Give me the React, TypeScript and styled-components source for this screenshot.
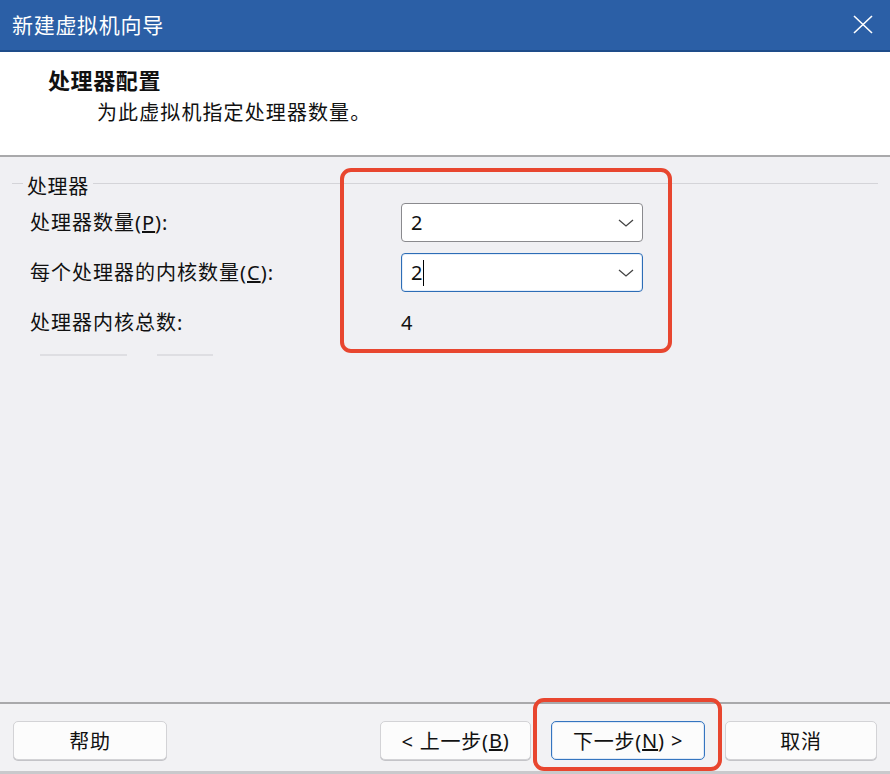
import React from 'react';
import styled, { createGlobalStyle } from 'styled-components';

const GlobalStyle = createGlobalStyle`
  html, body {
    margin: 0;
    padding: 0;
    background: #ffffff;
  }
  * {
    box-sizing: border-box;
  }
`;

const Window = styled.div`
  width: 890px;
  height: 774px;
  display: flex;
  flex-direction: column;
  font-family: 'Noto Sans', 'Noto Sans CJK SC', sans-serif;
  color: #111;
  background: #f0f0f3;
  overflow: hidden;
`;

const TitleBar = styled.div`
  height: 52px;
  flex: none;
  display: flex;
  align-items: center;
  justify-content: space-between;
  padding: 0 16px 2px 12px;
  background: #2b5fa6;
  border-bottom: 2px solid #1e4c8a;
`;

const TitleText = styled.span`
  color: #fff;
  font-size: 21px;
  letter-spacing: 0.7px;
`;

const CloseBtn = styled.button`
  width: 22px;
  height: 22px;
  padding: 0;
  border: none;
  background: none;
  display: flex;
  align-items: center;
  justify-content: center;
`;

const Header = styled.div`
  height: 105px;
  flex: none;
  display: flex;
  flex-direction: column;
  padding: 13px 0 0 48px;
  background: #fff;
  border-bottom: 2px solid #a9a9ab;
`;

const HeaderTitle = styled.div`
  font-size: 22px;
  font-weight: 700;
  line-height: 30px;
  letter-spacing: 0.6px;
`;

const HeaderDesc = styled.div`
  font-size: 20px;
  line-height: 30px;
  margin: 3px 0 0 49px;
  letter-spacing: 1.1px;
`;

const Body = styled.div`
  flex: 1;
  padding: 16px 12px 0 12px;
  background: #f0f0f3;
`;

const GroupBox = styled.div`
  position: relative;
  display: flex;
  flex-direction: column;
`;

const Legend = styled.div`
  display: flex;
  align-items: center;
  gap: 4px;
  height: 24px;
  font-size: 20px;
  letter-spacing: 0.6px;
  &::before {
    content: '';
    width: 11px;
    height: 1px;
    background: #d4d4d8;
    margin-top: -4px;
  }
  &::after {
    content: '';
    flex: 1;
    height: 1px;
    background: #d4d4d8;
    margin-top: -4px;
  }
`;

const FieldGrid = styled.div`
  display: grid;
  grid-template-columns: 371px 242px;
  grid-auto-rows: 39px;
  row-gap: 11px;
  margin-top: 6px;
  padding-left: 18px;
  align-items: center;
`;

const Label = styled.label`
  font-size: 20px;
  letter-spacing: 1px;
  line-height: 26px;
`;

const Combo = styled.div<{ $focused?: boolean }>`
  height: 39px;
  display: flex;
  align-items: center;
  justify-content: space-between;
  padding: 0 8px 0 9px;
  background: #fff;
  border: 1px solid ${(p) => (p.$focused ? '#2d6db6' : '#8a8a8e')};
  border-radius: 4px;
  box-shadow: ${(p) => (p.$focused ? 'inset 0 0 0 1px #e4eefa' : 'none')};
  font-size: 20px;
`;

const ComboValue = styled.span`
  display: flex;
  align-items: center;
`;

const Caret = styled.span`
  width: 1px;
  height: 26px;
  background: #000;
  margin-left: 1px;
`;

const Total = styled.span`
  font-size: 20px;
`;

const GhostRow = styled.div`
  display: flex;
  gap: 30px;
  padding-left: 28px;
  margin-top: 12px;
`;

const GhostLine = styled.div<{ $w: number }>`
  width: ${(p) => p.$w}px;
  height: 2px;
  background: #dedee2;
`;

const Highlight = styled.div`
  position: absolute;
  border: 4px solid #e8462f;
  border-radius: 11px;
  pointer-events: none;
`;

const Footer = styled.div`
  height: 72px;
  flex: none;
  display: flex;
  align-items: flex-start;
  gap: 20px;
  padding: 17px 13px 0 13px;
  background: #f2f2f4;
  border-top: 2px solid #a9a9ab;
  border-bottom: 3px solid #c9c9cc;
`;

const Button = styled.button<{ $w: number; $primary?: boolean }>`
  width: ${(p) => p.$w}px;
  height: 39px;
  display: flex;
  align-items: center;
  justify-content: center;
  font-family: inherit;
  font-size: 20px;
  letter-spacing: 0.8px;
  color: #111;
  background: #fcfcfc;
  border: 1px solid ${(p) => (p.$primary ? '#3575c0' : '#d3d3d6')};
  border-radius: 5px;
  box-shadow: ${(p) => (p.$primary ? 'inset 0 0 0 1px #dfe9f6' : '0 1px 0 #c4c4c8')};
  padding: 0;
`;

const Spacer = styled.div`
  flex: 1;
`;

const NextWrap = styled.div`
  position: relative;
  display: flex;
`;

const Chevron = () => (
  <svg width="16" height="8" viewBox="0 0 16 8">
    <path d="M1 1 L8 7 L15 1" fill="none" stroke="#444" strokeWidth="1.3" />
  </svg>
);

function App() {
  return (
    <Window>
      <GlobalStyle />
      <TitleBar>
        <TitleText>新建虚拟机向导</TitleText>
        <CloseBtn>
          <svg width="20" height="19" viewBox="0 0 20 19">
            <path d="M1 1 L19 18 M19 1 L1 18" stroke="#fff" strokeWidth="1.6" />
          </svg>
        </CloseBtn>
      </TitleBar>
      <Header>
        <HeaderTitle>处理器配置</HeaderTitle>
        <HeaderDesc>为此虚拟机指定处理器数量。</HeaderDesc>
      </Header>
      <Body>
        <GroupBox>
          <Legend>处理器</Legend>
          <FieldGrid>
            <Label>
              处理器数量(<u>P</u>):
            </Label>
            <Combo>
              <ComboValue>2</ComboValue>
              <Chevron />
            </Combo>
            <Label>
              每个处理器的内核数量(<u>C</u>):
            </Label>
            <Combo $focused>
              <ComboValue>
                2<Caret />
              </ComboValue>
              <Chevron />
            </Combo>
            <Label>处理器内核总数:</Label>
            <Total>4</Total>
          </FieldGrid>
          <GhostRow>
            <GhostLine $w={87} />
            <GhostLine $w={56} />
          </GhostRow>
          <Highlight style={{ left: 328, top: -5, width: 332, height: 185 }} />
        </GroupBox>
      </Body>
      <Footer>
        <Button $w={154}>帮助</Button>
        <Spacer />
        <Button $w={151}>
          &lt; 上一步(<u>B</u>)
        </Button>
        <NextWrap>
          <Button $w={154} $primary>
            下一步(<u>N</u>) &gt;
          </Button>
          <Highlight style={{ left: -18, top: -23, right: -17, bottom: -11 }} />
        </NextWrap>
        <Button $w={152}>取消</Button>
      </Footer>
    </Window>
  );
}

export default App;
